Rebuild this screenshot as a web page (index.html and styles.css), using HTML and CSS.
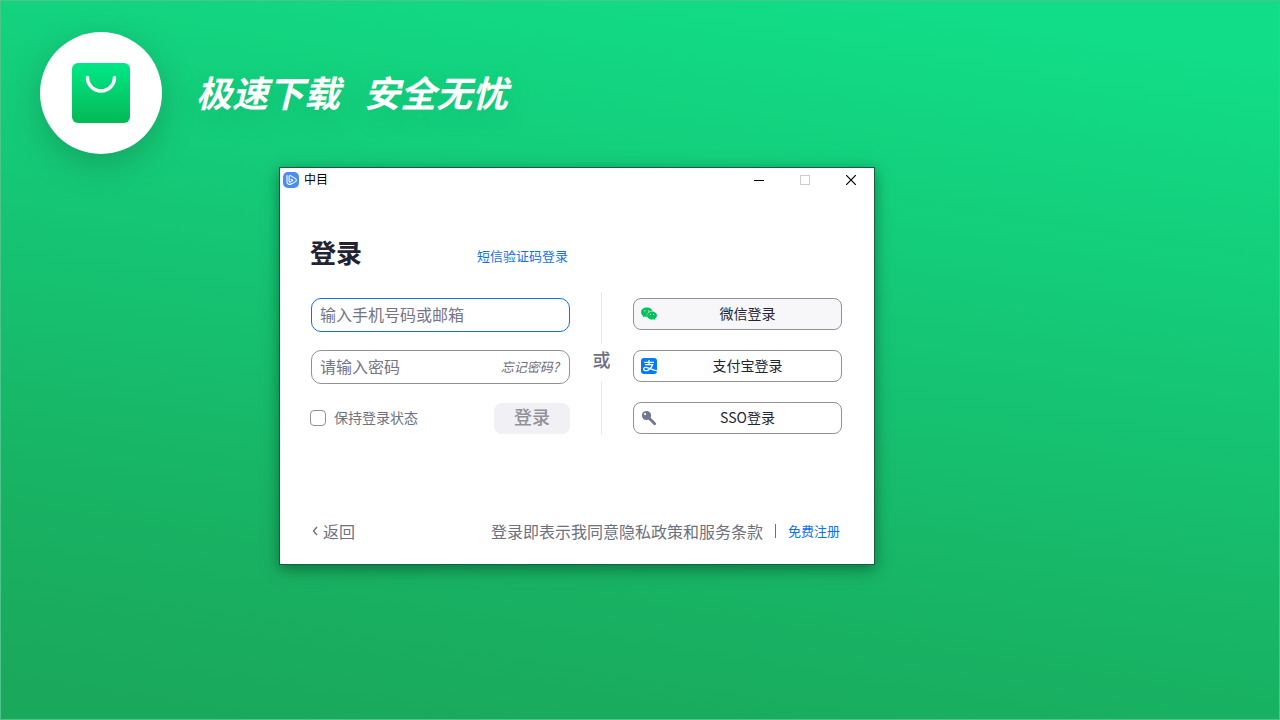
FILE: index.html
```
<!DOCTYPE html>
<html lang="zh-CN">
    <head>
        <title>中目</title>
        <meta charset="utf-8"/>
        <meta name="viewport" content="width=device-width, initial-scale=1">
        <link rel="stylesheet" href="styles.css">
    </head>
    <body>
        <header class="banner">
            <div class="logo">
                <svg width="60" height="60" viewBox="0 0 60 60" aria-hidden="true">
                    <defs>
                        <linearGradient id="bag" x1="0" y1="0" x2="0" y2="1">
                            <stop offset="0" stop-color="#00e887"/>
                            <stop offset="1" stop-color="#04b955"/>
                        </linearGradient>
                    </defs>
                    <rect x="1" y="0" width="58" height="60" rx="6" fill="url(#bag)"/>
                    <path d="M16.500 14.500a13.500 13.500 0 0 0 27 0" fill="none" stroke="#fff" stroke-width="3.500" stroke-linecap="round"/>
                </svg>
            </div>
            <p class="slogan"><span>极速下载</span><span>安全无忧</span></p>
        </header>

        <main class="window">
            <div class="titlebar">
                <svg width="16" height="16" viewBox="0 0 16 16" aria-hidden="true">
                    <rect width="16" height="16" rx="5" fill="#4a8dfa"/>
                    <path d="M4 3.500v6c0 2 1 3 2.700 2.900.9 0 1.600-.3 2.500-.8l2.900-1.700c1.700-1 1.700-2.500 0-3.500L8 3.900c-1.200-.7-1.900-.3-1.900.9v4.400c0 .9.600 1.200 1.300.7l2.400-1.600-1.700-1" fill="none" stroke="#fff" stroke-width="1.100" stroke-linecap="round" stroke-linejoin="round"/>
                </svg>
                <span class="name">中目</span>
                <button type="button" class="ctrl" aria-label="最小化">
                    <svg width="10" height="10"><path d="M0 5.500h10" stroke="#000"/></svg>
                </button>
                <button type="button" class="ctrl" aria-label="最大化" disabled>
                    <svg width="10" height="10"><rect x=".5" y=".5" width="9" height="9" fill="none" stroke="#ccc"/></svg>
                </button>
                <button type="button" class="ctrl" aria-label="关闭">
                    <svg width="10" height="10"><path d="M0 0l10 10M10 0L0 10" stroke="#000" stroke-width="1.200"/></svg>
                </button>
            </div>

            <div class="head">
                <h1>登录</h1>
                <a href="#">短信验证码登录</a>
            </div>

            <div class="content">
                <form class="login">
                    <div class="field active">
                        <input type="text" aria-label="手机号码或邮箱" placeholder="输入手机号码或邮箱">
                    </div>
                    <div class="field">
                        <input type="password" aria-label="密码" placeholder="请输入密码">
                        <a href="#">忘记密码?</a>
                    </div>
                    <div class="row">
                        <input type="checkbox" id="keep">
                        <label for="keep">保持登录状态</label>
                        <button type="submit" class="submit" disabled>登录</button>
                    </div>
                </form>

                <div class="or">或</div>

                <div class="third">
                    <button type="button" class="hover">
                        <svg width="16" height="16" viewBox="0 0 16 16" aria-hidden="true">
                            <path d="M5.800 1.500C2.600 1.500 0 3.600 0 6.200c0 1.500.8 2.800 2.100 3.700l-.5 1.700 2-1c.7.200 1.400.3 2.200.3 3.200 0 5.800-2.100 5.800-4.700S9 1.500 5.800 1.500z" fill="#07c160"/>
                            <ellipse cx="11" cy="9.400" rx="5.200" ry="4.300" fill="#f7f7fa"/>
                            <path d="M11 5.400c-2.800 0-5 1.800-5 4s2.200 4 5 4c.6 0 1.200-.1 1.700-.2l1.700.9-.4-1.500c1.200-.7 2-1.900 2-3.200 0-2.200-2.200-4-5-4z" fill="#07c160"/>
                            <circle cx="3.900" cy="4.800" r=".6" fill="#f7f7fa"/>
                            <circle cx="7.700" cy="4.800" r=".6" fill="#f7f7fa"/>
                            <circle cx="9.400" cy="8.200" r=".5" fill="#f7f7fa"/>
                            <circle cx="12.600" cy="8.200" r=".5" fill="#f7f7fa"/>
                        </svg>
                        <span>微信登录</span>
                    </button>
                    <button type="button">
                        <svg width="16" height="16" viewBox="0 0 16 16" aria-hidden="true">
                            <rect width="16" height="16" rx="3" fill="#027aff"/>
                            <path d="M3.200 4.300h9.600M8 2v4.500M4 6.700h7.600c-.7 2.500-2.400 4.400-4.300 5.400-1.700.9-4.700.9-4.700-1 0-1.300 1.700-1.900 3.500-1.500 2.300.5 5 2 9.900 3.400" fill="none" stroke="#fff" stroke-width="1.300"/>
                        </svg>
                        <span>支付宝登录</span>
                    </button>
                    <button type="button">
                        <svg width="16" height="16" viewBox="0 0 16 16" aria-hidden="true">
                            <path d="M7 7l6.700 6.700" stroke="#6e7891" stroke-width="2.800" stroke-linecap="round"/>
                            <circle cx="5.500" cy="5.500" r="4.600" fill="#6e7891"/>
                            <circle cx="4.100" cy="4.100" r="1.100" fill="#fff"/>
                        </svg>
                        <span>SSO登录</span>
                    </button>
                </div>
            </div>

            <footer class="foot">
                <a href="#" class="back">
                    <svg width="6" height="10" viewBox="0 0 6 10" aria-hidden="true"><path d="M5 1L1.500 5 5 9" fill="none" stroke="#6e7080" stroke-width="1.400"/></svg>
                    返回
                </a>
                <p>登录即表示我同意隐私政策和服务条款</p>
                <a href="#" class="reg">免费注册</a>
            </footer>
        </main>
    </body>
</html>
```
FILE: styles.css
```
*{
    margin: 0;
    padding: 0;
    box-sizing: border-box;
}
body{
    min-height: 100vh;
    border: 1px solid #4cc48c;
    background: linear-gradient(189deg, #11dd88 6%, #18b263 75%, #1aa85c 96%);
    font-family: "Noto Sans CJK SC", sans-serif;
    font-size: 16px;
    color: #6e7080;
}
a{
    color: #0e72ed;
    font-size: 13px;
    text-decoration: none;
}
button,input{
    font-family: inherit;
}
svg{
    display: block;
    flex: none;
}

/* 顶部横幅 */
.banner{
    display: flex;
    align-items: center;
    gap: 34px;
    padding: 31px 39px;
}
.logo{
    display: flex;
    align-items: center;
    justify-content: center;
    width: 122px;
    height: 122px;
    border-radius: 50%;
    background-color: #fff;
    box-shadow: 0 10px 32px rgba(20,110,65,.4);
}
.slogan{
    display: flex;
    gap: 24px;
    padding-bottom: 4px;
    font-size: 36px;
    line-height: 48px;
    font-weight: bold;
    font-style: italic;
    color: #fff;
    text-shadow: 0 8px 24px rgba(20,130,80,.2);
}

/* 登录窗口 */
.window{
    position: absolute;
    left: 279px;
    top: 167px;
    width: 596px;
    max-width: 100%;
    border: 1px solid #1c5c40;
    background-color: #fff;
    box-shadow: 0 4px 14px rgba(0,50,25,.5);
}
.titlebar{
    display: flex;
    align-items: center;
    height: 24px;
    padding-left: 3px;
}
.titlebar .name{
    flex: 1;
    margin-left: 5px;
    padding-bottom: 2px;
    font-size: 12px;
    line-height: 22px;
    color: #000;
}
.ctrl{
    display: flex;
    align-items: center;
    justify-content: center;
    width: 46px;
    height: 24px;
    border: none;
    background: none;
}

.head{
    display: flex;
    align-items: center;
    justify-content: space-between;
    width: 258px;
    margin: 40px 0 0 30px;
}
.head h1{
    font-size: 26px;
    line-height: 40px;
    color: #232333;
}
.head a{
    padding-top: 6px;
}

.content{
    display: grid;
    grid-template-columns: 1fr 63px 209px;
    padding: 20px 32px 0 31px;
}
.login{
    padding-top: 6px;
}
.field{
    display: flex;
    align-items: center;
    height: 34px;
    margin-bottom: 18px;
    padding: 0 10px 2px 8px;
    border: 1px solid #909096;
    border-radius: 10px;
}
.field.active{
    border-color: #0e72ed;
}
.field input{
    flex: 1;
    min-width: 0;
    height: 24px;
    padding-bottom: 1px;
    border: none;
    outline: none;
    background: none;
    font-size: 16px;
}
.field input::placeholder{
    color: #747487;
}
.field a{
    font-style: italic;
    color: #6e7080;
}
.row{
    display: flex;
    align-items: center;
    height: 32px;
    font-size: 14px;
}
.row input{
    appearance: none;
    width: 16px;
    height: 16px;
    margin: 0 8px 0 -1px;
    border: 1px solid #909096;
    border-radius: 4px;
}
.row input:checked{
    background-color: #0e72ed;
}
.row label{
    padding-bottom: 2px;
}
.submit{
    width: 76px;
    height: 31px;
    margin-left: auto;
    padding-bottom: 4px;
    border: none;
    border-radius: 8px;
    background-color: #f0f0f5;
    font-size: 18px;
    line-height: 27px;
    font-weight: 500;
    color: #909096;
}

.or{
    display: flex;
    flex-direction: column;
    align-items: center;
    font-size: 18px;
    line-height: 30px;
    font-weight: 500;
}
.or::before,.or::after{
    content: "";
    flex: 1;
    width: 1px;
    background-color: #e4e4ed;
}
.or::after{
    margin-top: 8px;
}

.third{
    display: flex;
    flex-direction: column;
    gap: 20px;
    padding-top: 6px;
}
.third button{
    display: flex;
    align-items: center;
    height: 32px;
    padding: 0 7px;
    border: 1px solid #909096;
    border-radius: 8px;
    background-color: #fff;
    font-size: 14px;
    line-height: 20px;
    color: #232333;
}
.third .hover{
    background-color: #f7f7fa;
}
.third span{
    flex: 1;
    padding: 0 0 2px 4px;
}

.foot{
    display: flex;
    align-items: center;
    margin-top: 84px;
    padding: 0 34px 20px 32px;
    line-height: 26px;
}
.foot .back{
    display: flex;
    align-items: center;
    gap: 5px;
    font-size: 16px;
    color: #6e7080;
}
.foot p{
    margin-left: auto;
}
.foot .reg{
    display: flex;
    align-items: center;
}
.foot .reg::before{
    content: "";
    width: 1px;
    height: 14px;
    margin: 0 12px;
    background-color: #6e7080;
}
```
